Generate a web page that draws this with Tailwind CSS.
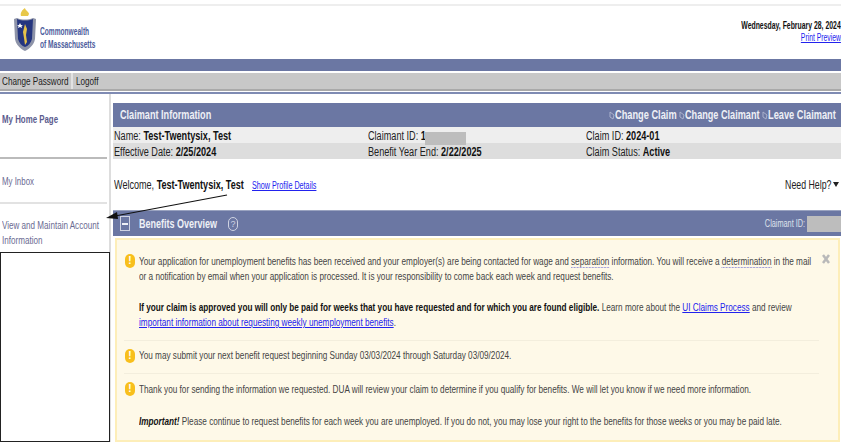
<!DOCTYPE html>
<html lang="en">
<head>
  <meta charset="UTF-8" />
  <title>Claimant Home - Commonwealth of Massachusetts</title>
  <script src="https://cdn.jsdelivr.net/npm/@tailwindcss/browser@4"></script>
</head>
<body class="bg-white w-[841px] h-[442px] overflow-hidden relative whitespace-nowrap font-['Liberation_Sans',sans-serif] text-[#333]">
  <div class="mt-1 h-[2px] bg-[#eeeeee]"></div>

  <!-- header -->
  <header class="h-[53px] flex justify-between">
    <div class="flex items-start pl-3 pt-px">
      <svg width="26" height="48" viewBox="0 0 26 48">
        <path d="M9 9c-1-3 1-6 4-8 0 2 4 4 4 6l-1 2z" fill="#e8c84a"/>
        <path d="M2 12l3-1c5 2 11 2 16 0l3 1-1 20c-1 6-6 10-10 12-4-2-9-6-10-12z" fill="#8d93a8"/>
        <path d="M5 12c5 2 11 2 16 0l-1 20c-1 4-4 7-7 8-3-1-6-4-7-8z" fill="#24357f"/>
        <path d="M13 17l2 5-1 6 1 7-2 3-1-7-1-6z" fill="#e6c24a"/>
        <path d="M8 16l1 2 2 0-1.500 1 .5 2-2-1-2 1 .5-2-1.500-1 2 0z" fill="#fff"/>
      </svg>
      <div class="ml-[2px] mt-[18px] text-[10px] leading-[13px] font-bold text-[#4c5c9c]">
        <span class="block origin-left scale-x-[0.66]">Commonwealth</span>
        <span class="block origin-left scale-x-[0.66]">of Massachusetts</span>
      </div>
    </div>
    <div class="text-right text-[10px] leading-3 pt-[14px]">
      <div><b class="inline-block origin-right scale-x-[0.687] text-[#111]">Wednesday, February 28, 2024</b></div>
      <div><a href="#" class="inline-block origin-right scale-x-[0.68] text-[#2222ee] underline">Print Preview</a></div>
    </div>
  </header>

  <div class="h-3 bg-[#6b77a3]"></div>
  <nav class="mt-[2px] h-[16px] bg-[#c8c8c8] flex items-center text-[11px] text-[#222]">
    <div class="w-[73px] pl-[2px] border-r-2 border-[#e2e2e2]"><span class="inline-block origin-left scale-x-[0.74]">Change Password</span></div>
    <div class="pl-[3px]"><span class="inline-block origin-left scale-x-[0.74]">Logoff</span></div>
  </nav>
  <div class="h-[2px] bg-[#a9a9a9]"></div>
  <div class="mt-px h-[2px] bg-[#7f8bb3]"></div>

  <div class="flex h-[348px]">
    <!-- sidebar -->
    <aside class="w-[111px] shrink-0 border-r-2 border-[#dddddd] flex flex-col text-[10.500px] text-[#6a6a92]">
      <div class="h-[63px] pt-[18px] pl-[2px] font-bold text-[#5c5c8e]"><span class="inline-block origin-left scale-x-[0.75]">My Home Page</span></div>
      <div class="h-[2px] w-[107px] bg-[#bbbbbb]"></div>
      <div class="h-[43px] pt-[15px] pl-[2px]"><span class="inline-block origin-left scale-x-[0.75]">My Inbox</span></div>
      <div class="h-[2px] w-[107px] bg-[#e2e2e2]"></div>
      <div class="pt-[14px] pl-[2px] leading-[15px] h-[48px]">
        <span class="block origin-left scale-x-[0.77]">View and Maintain Account</span>
        <span class="block origin-left scale-x-[0.77]">Information</span>
      </div>
      <div class="flex-1 w-[110px] border border-[#222]"></div>
    </aside>

    <!-- main column -->
    <main class="flex-1 pl-[2px] pt-[9px] min-w-0">
      <section>
        <div class="h-[24px] bg-[#6b77a3] flex items-center justify-between pl-[7px] pr-[5px] text-[12px] font-bold text-[#eef0f6]">
          <span class="inline-block origin-left scale-x-[0.76]">Claimant Information</span>
          <div class="flex gap-[2px]">
            <div class="w-[68px] flex items-center"><svg class="w-[6px] h-[10px] shrink-0" viewBox="0 0 6 10"><path d="M1 2l4 3-1 4-3-2z" fill="none" stroke="#aab2cc"/></svg><span class="inline-block origin-left scale-x-[0.77]">Change Claim</span></div>
            <div class="w-[81px] flex items-center"><svg class="w-[6px] h-[10px] shrink-0" viewBox="0 0 6 10"><path d="M1 2l4 3-1 4-3-2z" fill="none" stroke="#aab2cc"/></svg><span class="inline-block origin-left scale-x-[0.76]">Change Claimant</span></div>
            <div class="w-[74px] flex items-center"><svg class="w-[6px] h-[10px] shrink-0" viewBox="0 0 6 10"><path d="M1 2l4 3-1 4-3-2z" fill="none" stroke="#aab2cc"/></svg><span class="inline-block origin-left scale-x-[0.77]">Leave Claimant</span></div>
          </div>
        </div>
        <div class="grid grid-cols-[254px_218px_1fr] h-4 items-center bg-[#eeeeee] pl-px text-[12px] text-[#222]">
          <div><span class="inline-block origin-left scale-x-[0.76]">Name: <b class="text-[#111]">Test-Twentysix, Test</b></span></div>
          <div class="relative"><span class="inline-block origin-left scale-x-[0.76]">Claimant ID: <b class="text-[#111]">1</b></span><span class="absolute left-[57px] top-[5px] w-[41px] h-[13px] bg-[#bdbdbd]"></span></div>
          <div><span class="inline-block origin-left scale-x-[0.76]">Claim ID: <b class="text-[#111]">2024-01</b></span></div>
        </div>
        <div class="grid grid-cols-[254px_218px_1fr] h-4 items-center bg-[#dddddd] pl-px text-[12px] text-[#222]">
          <div><span class="inline-block origin-left scale-x-[0.76]">Effective Date: <b class="text-[#111]">2/25/2024</b></span></div>
          <div><span class="inline-block origin-left scale-x-[0.76]">Benefit Year End: <b class="text-[#111]">2/22/2025</b></span></div>
          <div><span class="inline-block origin-left scale-x-[0.76]">Claim Status: <b class="text-[#111]">Active</b></span></div>
        </div>
      </section>

      <div class="h-[51px] flex items-center justify-between pl-px text-[12px] text-[#222]">
        <div class="flex items-center">
          <div class="w-[138px]"><span class="inline-block origin-left scale-x-[0.755]">Welcome, <b class="text-[#111]">Test-Twentysix, Test</b></span></div>
          <a href="#" class="inline-block mt-[2px] origin-left scale-x-[0.72] text-[10px] text-[#2222ee] underline">Show Profile Details</a>
        </div>
        <div class="flex items-center pr-[2px]">
          <span class="inline-block origin-right scale-x-[0.73]">Need Help?</span>
          <svg class="ml-[2px]" width="6" height="5" viewBox="0 0 6 5"><path d="M0 0h6l-3 5z" fill="#222"/></svg>
        </div>
      </div>

      <section>
        <div class="h-[26px] bg-[#6b77a3] border-t border-[#9aa3c0] flex items-center justify-between pl-[7px] text-[#eef0f6]">
          <div class="flex items-center">
            <span class="w-[10px] h-[15px] border border-[#cfd3e2] flex items-center justify-center"><span class="w-[6px] h-[2px] bg-[#eef0f6]"></span></span>
            <div class="ml-[9px] w-[79px] text-[12px] font-bold"><span class="inline-block origin-left scale-x-[0.75]">Benefits Overview</span></div>
            <span class="ml-[10px] w-[10px] h-[14px] rounded-full border border-[#cfd3e2] text-[9px] leading-[12px] text-center text-[#cfd3e2]">?</span>
          </div>
          <div class="flex items-center text-[10px] text-[#dfe2ec]">
            <span class="inline-block origin-right scale-x-[0.73] mr-[2px]">Claimant ID:</span>
            <span class="w-[34px] h-[16px] bg-[#bdbdbd]"></span>
          </div>
        </div>

        <div class="mt-[2px] ml-[2px] mr-px h-[204px] bg-[#fef9e8] border-2 border-[#fdeeb9] relative pl-[7px] pt-[14px] text-[11px] leading-[15px] text-[#444]">
          <svg class="absolute right-[8px] top-[14px]" width="8" height="10" viewBox="0 0 8 10"><path d="M1 1l6 8M7 1l-6 8" stroke="#b9b9b9" stroke-width="2.500"/></svg>

          <div class="w-[695px] h-[87px] flex border-b border-[#f3eedd]">
            <span class="ml-px w-[10px] h-[14px] rounded-full bg-[#f8bf1c] text-white text-[10px] leading-[14px] font-bold text-center shrink-0">!</span>
            <div class="ml-[4px] w-[680px] shrink-0">
              <p class="w-max origin-left scale-x-[0.745]">Your application for unemployment benefits has been received and your employer(s) are being contacted for wage and <span class="border-b border-dotted border-[#6a6ad0]">separation</span> information. You will receive a <span class="border-b border-dotted border-[#6a6ad0]">determination</span> in the mail</p>
              <p class="w-max origin-left scale-x-[0.745]">or a notification by email when your application is processed. It is your responsibility to come back each week and request benefits.</p>
              <p class="w-max origin-left scale-x-[0.745] mt-[16px]"><b class="text-[#111]">If your claim is approved you will only be paid for weeks that you have requested and for which you are found eligible.</b> Learn more about the <a href="#" class="text-[#2222ee] underline">UI Claims Process</a> and review</p>
              <p class="w-max origin-left scale-x-[0.745]"><a href="#" class="text-[#2222ee] underline">important information about requesting weekly unemployment benefits</a>.</p>
            </div>
          </div>

          <div class="w-[695px] h-[33px] flex items-center pb-[3px] border-b border-[#f3eedd]">
            <span class="ml-px w-[10px] h-[14px] rounded-full bg-[#f8bf1c] text-white text-[10px] leading-[14px] font-bold text-center shrink-0">!</span>
            <p class="ml-[4px] w-max origin-left scale-x-[0.745]">You may submit your next benefit request beginning Sunday 03/03/2024 through Saturday 03/09/2024.</p>
          </div>

          <div class="w-[695px] flex pt-[8px]">
            <span class="ml-px w-[10px] h-[14px] rounded-full bg-[#f8bf1c] text-white text-[10px] leading-[14px] font-bold text-center shrink-0">!</span>
            <div class="ml-[4px] w-[680px] shrink-0">
              <p class="w-max origin-left scale-x-[0.745]">Thank you for sending the information we requested. DUA will review your claim to determine if you qualify for benefits. We will let you know if we need more information.</p>
              <p class="w-max origin-left scale-x-[0.745] mt-[17px]"><b class="italic text-[#111]">Important!</b> Please continue to request benefits for each week you are unemployed. If you do not, you may lose your right to the benefits for those weeks or you may be paid late.</p>
            </div>
          </div>
        </div>
      </section>
    </main>
  </div>

  <!-- annotation arrow drawn over the page -->
  <svg class="absolute left-0 top-0 pointer-events-none" width="841" height="442">
    <line x1="227" y1="195" x2="115" y2="216" stroke="#111" stroke-width="1.200"/>
    <path d="M106 218l11-6 1 7z" fill="#111"/>
  </svg>
</body>
</html>
